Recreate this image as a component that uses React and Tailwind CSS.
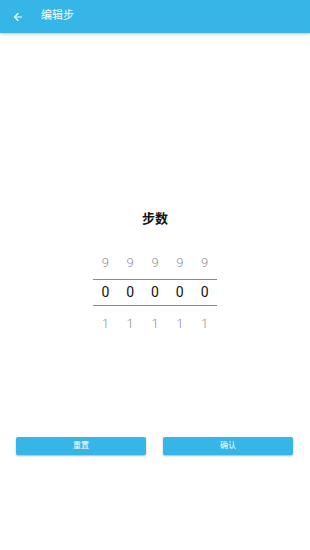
import React from 'react'
import { ArrowLeft } from 'lucide-react'

const font = { fontFamily: '"Roboto", "Noto Sans CJK SC", sans-serif' }

export default function App(){
  const cols = [0, 1, 2, 3, 4]
  return (
    <div className="w-[310px] h-[550px] bg-white flex flex-col" style={font}>
      <div className="h-[33px] bg-[#35b6e6] flex items-center shadow-[0_1px_3px_rgba(0,0,0,0.25)] shrink-0">
        <ArrowLeft className="ml-[12px] text-white" size={12} strokeWidth={2.2} />
        <span className="ml-[17px] text-[11px] text-white">编辑步</span>
      </div>
      <div className="flex flex-col items-center mt-[178px]">
        <div className="text-[13px] font-bold text-[#111] leading-[16px]">步数</div>
        <div className="w-[124px] mt-[20px] flex flex-col">
          <div className="h-[32px] flex">
            {cols.map(i=><div key={i} className="w-[25px] flex items-center justify-center text-[13px] font-light text-[#8f8f8f]">9</div>)}
          </div>
          <div className="h-[27px] flex border-y border-[#8a8a8a]">
            {cols.map(i=><div key={i} className="w-[25px] flex items-center justify-center text-[14px] text-[#111]">0</div>)}
          </div>
          <div className="h-[36px] flex">
            {cols.map(i=><div key={i} className="w-[25px] flex items-center justify-center text-[13px] font-light text-[#8f8f8f]">1</div>)}
          </div>
        </div>
      </div>
      <div className="flex gap-[17px] pl-[16px] pr-[17px] mt-[95px]">
        <button className="w-[130px] h-[18px] rounded-[2px] bg-[#35b6e6] text-white text-[8px] shadow-[0_1px_2px_rgba(0,0,0,0.3)]">重置</button>
        <button className="w-[130px] h-[18px] rounded-[2px] bg-[#35b6e6] text-white text-[8px] shadow-[0_1px_2px_rgba(0,0,0,0.3)]">确认</button>
      </div>
    </div>
  )
}
